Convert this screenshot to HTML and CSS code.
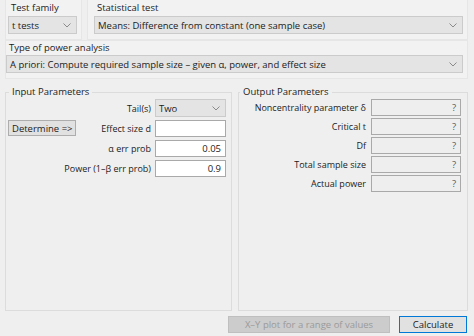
FILE: index.html
```html
<!DOCTYPE html>
<html>
<head>
<meta charset="utf-8">
<link rel="stylesheet" href="styles.css">
</head>
<body>
<div class="app">
  <div class="top">
    <div class="panel family">
      <div class="plabel">Test family</div>
      <div class="select">
        <span>t tests</span>
        <svg class="chev" width="8" height="5" viewBox="0 0 8 5"><polyline points="0.5,0.5 4,4 7.5,0.5" fill="none" stroke="#8a8a8a" stroke-width="1"/></svg>
      </div>
    </div>
    <div class="panel stat">
      <div class="plabel">Statistical test</div>
      <div class="select">
        <span>Means: Difference from constant (one sample case)</span>
        <svg class="chev" width="8" height="5" viewBox="0 0 8 5"><polyline points="0.5,0.5 4,4 7.5,0.5" fill="none" stroke="#8a8a8a" stroke-width="1"/></svg>
      </div>
    </div>
  </div>
  <div class="panel analysis">
    <div class="plabel">Type of power analysis</div>
    <div class="select">
      <span>A priori: Compute required sample size – given α, power, and effect size</span>
      <svg class="chev" width="8" height="5" viewBox="0 0 8 5"><polyline points="0.5,0.5 4,4 7.5,0.5" fill="none" stroke="#8a8a8a" stroke-width="1"/></svg>
    </div>
  </div>
  <div class="main">
    <fieldset class="group input">
      <legend>Input Parameters</legend>
      <div class="rows">
        <div class="row">
          <div class="lbl">Tail(s)</div>
          <div class="select small">
            <span>Two</span>
            <svg class="chev" width="8" height="5" viewBox="0 0 8 5"><polyline points="0.5,0.5 4,4 7.5,0.5" fill="none" stroke="#8a8a8a" stroke-width="1"/></svg>
          </div>
        </div>
        <div class="row">
          <div class="btn determine">Determine =&gt;</div>
          <div class="lbl">Effect size d</div>
          <div class="field"></div>
        </div>
        <div class="row">
          <div class="lbl">α err prob</div>
          <div class="field">0.05</div>
        </div>
        <div class="row">
          <div class="lbl">Power (1–β err prob)</div>
          <div class="field">0.9</div>
        </div>
      </div>
    </fieldset>
    <fieldset class="group output">
      <legend>Output Parameters</legend>
      <div class="rows out">
        <div class="row">
          <div class="lbl">Noncentrality parameter δ</div>
          <div class="field ro">?</div>
        </div>
        <div class="row">
          <div class="lbl">Critical t</div>
          <div class="field ro">?</div>
        </div>
        <div class="row">
          <div class="lbl">Df</div>
          <div class="field ro">?</div>
        </div>
        <div class="row">
          <div class="lbl">Total sample size</div>
          <div class="field ro">?</div>
        </div>
        <div class="row">
          <div class="lbl">Actual power</div>
          <div class="field ro">?</div>
        </div>
      </div>
    </fieldset>
  </div>
  <div class="bottom">
    <div class="btn disabled xy">X–Y plot for a range of values</div>
    <div class="btn primary calc">Calculate</div>
  </div>
</div>
</body>
</html>
```
FILE: styles.css
```css
html, body {
  margin: 0;
  padding: 0;
}
body {
  width: 474px;
  height: 336px;
  background: #efefef;
  font-family: "Open Sans", "Noto Sans", "DejaVu Sans", sans-serif;
  font-size: 9.5px;
  color: #1b1b1b;
  overflow: hidden;
}
.app {
  display: flex;
  flex-direction: column;
  height: 336px;
}
.top {
  display: flex;
  gap: 5px;
  padding: 0 6px 0 5px;
  height: 40px;
}
.panel {
  background: #f2f2f2;
  border: 1px solid #e6e6e6;
  border-top: none;
  box-sizing: border-box;
  display: flex;
  flex-direction: column;
}
.plabel {
  height: 16px;
  line-height: 16px;
  padding-left: 3px;
}
.family {
  width: 77px;
  padding: 0 4px 0 2px;
}
.stat {
  flex: 1;
  padding: 0 4px 0 6px;
}
.analysis {
  margin: 0 6px 0 5px;
  height: 39px;
  border-top: 1px solid #e6e6e6;
  padding: 0 4px 0 0;
}
.analysis .plabel {
  height: 14px;
  line-height: 14px;
}
.select {
  height: 18px;
  box-sizing: border-box;
  background: #e4e4e4;
  border: 1px solid #cbcbcb;
  display: flex;
  align-items: center;
  justify-content: space-between;
  padding: 0 5px 0 3px;
  white-space: nowrap;
  overflow: hidden;
}
.select.small {
  width: 71px;
  height: 18px;
  flex: none;
}
.chev {
  flex: none;
}
.main {
  display: flex;
  gap: 6px;
  padding: 0 6px 0 5px;
  margin-top: 6px;
  height: 226px;
}
.group {
  margin: 0;
  border: 1px solid #dcdcdc;
  padding: 0;
  box-sizing: border-box;
  height: 226px;
  min-width: 0;
}
.group legend {
  padding: 0 3px;
  margin-left: 1px;
  line-height: 14px;
}
.input {
  width: 227px;
  padding: 0 5px 0 2px;
}
.output {
  flex: 1;
  padding: 0 6px 0 0;
}
.rows {
  display: flex;
  flex-direction: column;
  gap: 2px;
  padding-top: 0;
}
.rows.out {
  gap: 2px;
}
.row {
  display: flex;
  justify-content: flex-end;
  align-items: center;
  gap: 4px;
  height: 18px;
}
.rows.out .row {
  gap: 5px;
  height: 17px;
}
.lbl {
  text-align: right;
  white-space: nowrap;
  font-size: 9px;
}
.field {
  width: 71px;
  flex: none;
  height: 17px;
  box-sizing: border-box;
  background: #ffffff;
  border: 1px solid #a9a9a9;
  text-align: right;
  padding: 0 4px;
  line-height: 15px;
}
.field.ro {
  width: 90px;
  background: #eeeeee;
  color: #555;
}
.btn {
  height: 16px;
  box-sizing: border-box;
  display: flex;
  align-items: center;
  justify-content: center;
  background: #e1e1e1;
  border: 1px solid #adadad;
  white-space: nowrap;
}
.determine {
  width: 68px;
  justify-content: flex-start;
  padding-left: 3px;
  margin-right: auto;
}
.bottom {
  display: flex;
  justify-content: flex-end;
  gap: 9px;
  padding: 5px 7px 0 0;
}
.xy {
  width: 162px;
  height: 17px;
  background: #cccccc;
  border-color: #bfbfbf;
  color: #9a9a9a;
}
.calc {
  width: 68px;
  height: 17px;
  border: 1.5px solid #0078d7;
}
```
